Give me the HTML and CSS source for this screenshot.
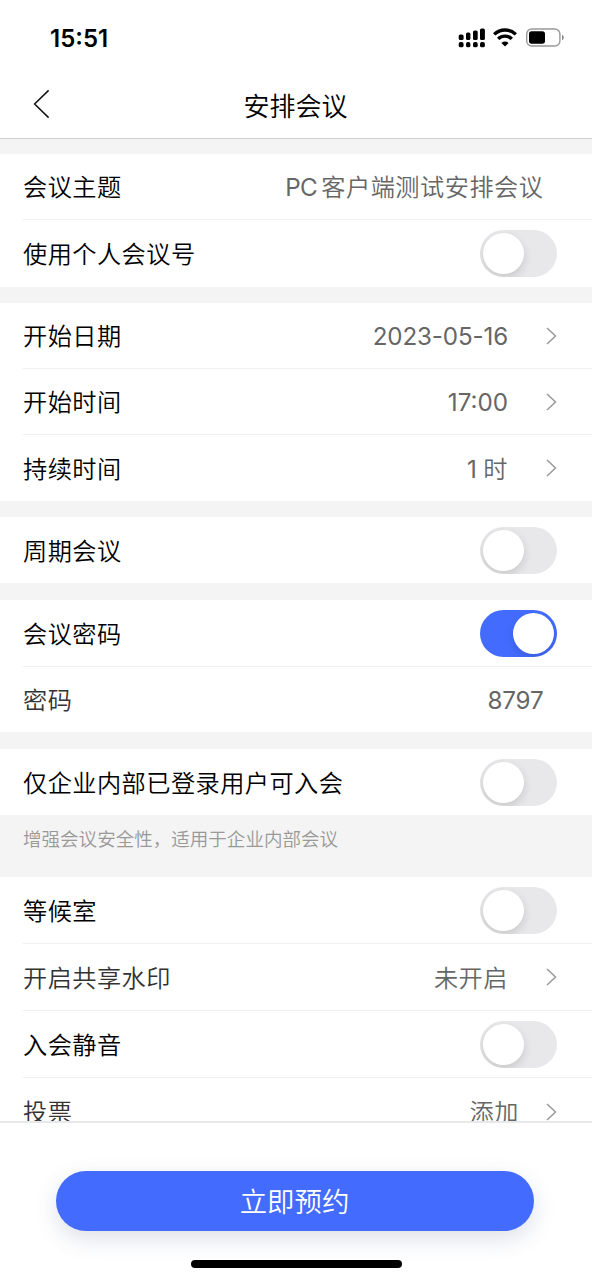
FILE: index.html
```html
<!DOCTYPE html>
<html lang="zh-CN">
<head>
<meta charset="utf-8">
<title>安排会议</title>
<link rel="stylesheet" href="styles.css">
</head>
<body>
<div class="screen">
  <div class="status">
    <span class="clock">15:51</span>
    <svg class="status-icons" width="110" height="24" viewBox="0 0 110 24">
      <g fill="#000">
        <rect x="2.7" y="9.5" width="4.9" height="5.6" rx="1.6"/>
        <rect x="10" y="7.5" width="4.4" height="7.6" rx="1.6"/>
        <rect x="17" y="5.5" width="4.7" height="9.6" rx="1.6"/>
        <rect x="24" y="3.4" width="4.9" height="11.7" rx="1.6"/>
        <rect x="2.7" y="17" width="4.9" height="5.3" rx="1.9"/>
        <rect x="10" y="17" width="4.4" height="5.3" rx="1.9"/>
        <rect x="17" y="17" width="4.7" height="5.3" rx="1.9"/>
        <rect x="24" y="17" width="4.9" height="5.3" rx="1.9"/>
      </g>
      <g fill="none" stroke="#000" stroke-width="3.4">
        <path d="M38.2 9.4a15.5 15.5 0 0 1 21.6 0"/>
        <path d="M42.2 13.9a9.8 9.8 0 0 1 13.6 0"/>
      </g>
      <path d="M49 21.5l-3.6-3.6a5.2 5.2 0 0 1 7.2 0z" fill="#000"/>
      <rect x="70.7" y="4" width="33.2" height="17" rx="5" fill="none" stroke="#999" stroke-width="1.4"/>
      <rect x="73" y="6.3" width="16" height="12.4" rx="2.6" fill="#000"/>
      <path d="M106 9.8c2.4 1.2 2.4 4.2 0 5.4z" fill="#888"/>
    </svg>
  </div>
  <header class="nav">
    <svg class="back" width="17" height="30" viewBox="0 0 17 30"><path d="M15.6 1.4L1.6 15l14 13.6" fill="none" stroke="#111" stroke-width="1.5"/></svg>
    <h1 class="title">安排会议</h1>
  </header>
  <main class="list">
    <section class="group">
      <div class="row"><span class="label">会议主题</span><span class="value"><span class="latin">PC</span>客户端测试安排会议</span></div>
      <div class="row row-tall"><span class="label">使用个人会议号</span><span class="switch"></span></div>
    </section>
    <section class="group near-above">
      <div class="row"><span class="label">开始日期</span><span class="value linked digits">2023-05-16</span><svg class="chevron" viewBox="0 0 11 18"><path d="M1 1l8.5 8L1 17"/></svg></div>
      <div class="row"><span class="label">开始时间</span><span class="value linked time">17:00</span><svg class="chevron" viewBox="0 0 11 18"><path d="M1 1l8.5 8L1 17"/></svg></div>
      <div class="row"><span class="label">持续时间</span><span class="value linked"><span class="count">1</span>时</span><svg class="chevron" viewBox="0 0 11 18"><path d="M1 1l8.5 8L1 17"/></svg></div>
    </section>
    <section class="group near-above">
      <div class="row"><span class="label">周期会议</span><span class="switch"></span></div>
    </section>
    <section class="group">
      <div class="row row-tall"><span class="label">会议密码</span><span class="switch on"></span></div>
      <div class="row row-short"><span class="label soft">密码</span><span class="value code">8797</span></div>
    </section>
    <section class="group">
      <div class="row"><span class="label">仅企业内部已登录用户可入会</span><span class="switch"></span></div>
    </section>
    <p class="note">增强会议安全性，适用于企业内部会议</p>
    <section class="group">
      <div class="row row-tall"><span class="label">等候室</span><span class="switch"></span></div>
      <div class="row row-tall"><span class="label soft">开启共享水印</span><span class="value linked">未开启</span><svg class="chevron" viewBox="0 0 11 18"><path d="M1 1l8.5 8L1 17"/></svg></div>
      <div class="row row-tall"><span class="label">入会静音</span><span class="switch"></span></div>
      <div class="row row-tall"><span class="label soft">投票</span><span class="value near">添加</span><svg class="chevron" viewBox="0 0 11 18"><path d="M1 1l8.5 8L1 17"/></svg></div>
    </section>
  </main>
  <footer class="footer">
    <button class="submit">立即预约</button>
    <div class="home-bar"></div>
  </footer>
</div>
</body>
</html>
```
FILE: styles.css
```css
* { box-sizing: border-box; }
body {
  margin: 0;
  background: #fff;
  font-family: Inter, "Noto Sans CJK SC", sans-serif;
  font-weight: 350;
  color: #000;
}
.screen {
  width: 592px;
  height: 1280px;
  display: flex;
  flex-direction: column;
  overflow: hidden;
}
.status {
  flex: none;
  height: 72px;
  padding: 2px 26px 0 50px;
  display: flex;
  align-items: center;
  justify-content: space-between;
}
.clock { font-size: 24px; font-weight: 600; letter-spacing: 0; padding-top: 2px; }
.nav {
  flex: none;
  height: 67px;
  padding: 0 33px;
  display: grid;
  grid-template-columns: 17px 1fr 17px;
  align-items: center;
  border-bottom: 1px solid #cfcfcf;
}
.back { margin-bottom: 3px; }
.title {
  margin: 0;
  padding: 3px 1px 0 0;
  text-align: center;
  font-size: 26px;
  font-weight: 350;
  line-height: 36px;
}
.list {
  flex: 1;
  min-height: 0;
  overflow: hidden;
  padding-top: 15px;
  background: #f4f4f4;
}
.group { background: #fff; }
.group + .group { margin-top: 17px; }
.group + .near-above { margin-top: 16px; }
.row {
  height: 66px;
  margin-left: 23px;
  padding-right: 35px;
  display: flex;
  align-items: center;
  border-bottom: 1px solid #f0f0f0;
}
.row-tall { height: 67px; }
.row-short { height: 65px; }
.row:last-child { border-bottom: 0; }
.label {
  flex: 1;
  padding-top: 3px;
  font-size: 24.2px;
  letter-spacing: 0.46px;
  line-height: 36px;
}
.soft { color: #333; }
.value {
  margin-right: 13.5px;
  padding-top: 3px;
  font-size: 24.2px;
  letter-spacing: 0.5px;
  line-height: 36px;
  color: #666;
}
.linked { margin-right: 38px; }
.near { margin-right: 27px; }
.latin { margin-right: 4px; letter-spacing: -0.5px; font-weight: 400; }
.count { margin-right: 6px; font-weight: 400; }
.digits, .time, .code { letter-spacing: -0.15px; font-weight: 400; padding-top: 2px; }
.time { letter-spacing: 0; }
.chevron {
  width: 11px;
  height: 18px;
  fill: none;
  stroke: #999;
  stroke-width: 1.5;
}
.switch {
  width: 77px;
  height: 47px;
  padding: 3px;
  border-radius: 24px;
  background: #e8e8ea;
  display: flex;
  overflow: hidden;
}
.switch::before {
  content: "";
  width: 41px;
  height: 41px;
  border-radius: 50%;
  background: #fff;
  box-shadow: 0 4px 10px rgba(0, 0, 0, 0.14);
}
.on { background: #436cff; justify-content: flex-end; }
.note {
  margin: 0;
  height: 62px;
  padding: 10px 23px 0;
  font-size: 18.55px;
  line-height: 28px;
  color: #999;
}
.footer {
  flex: none;
  height: 159px;
  padding-top: 48px;
  border-top: 2px solid #e8e8e8;
  display: flex;
  flex-direction: column;
  align-items: center;
}
.submit {
  width: 478px;
  height: 60px;
  margin-right: 2px;
  padding: 2px 1px 0 0;
  border: 0;
  border-radius: 30px;
  background: #436cff;
  box-shadow: 0 8px 22px rgba(60, 80, 130, 0.17);
  color: #fff;
  font-family: inherit;
  font-size: 27.4px;
  font-weight: 350;
  line-height: 58px;
}
.home-bar {
  width: 211px;
  height: 8px;
  margin-top: 29px;
  border-radius: 4px;
  background: #000;
}
```
